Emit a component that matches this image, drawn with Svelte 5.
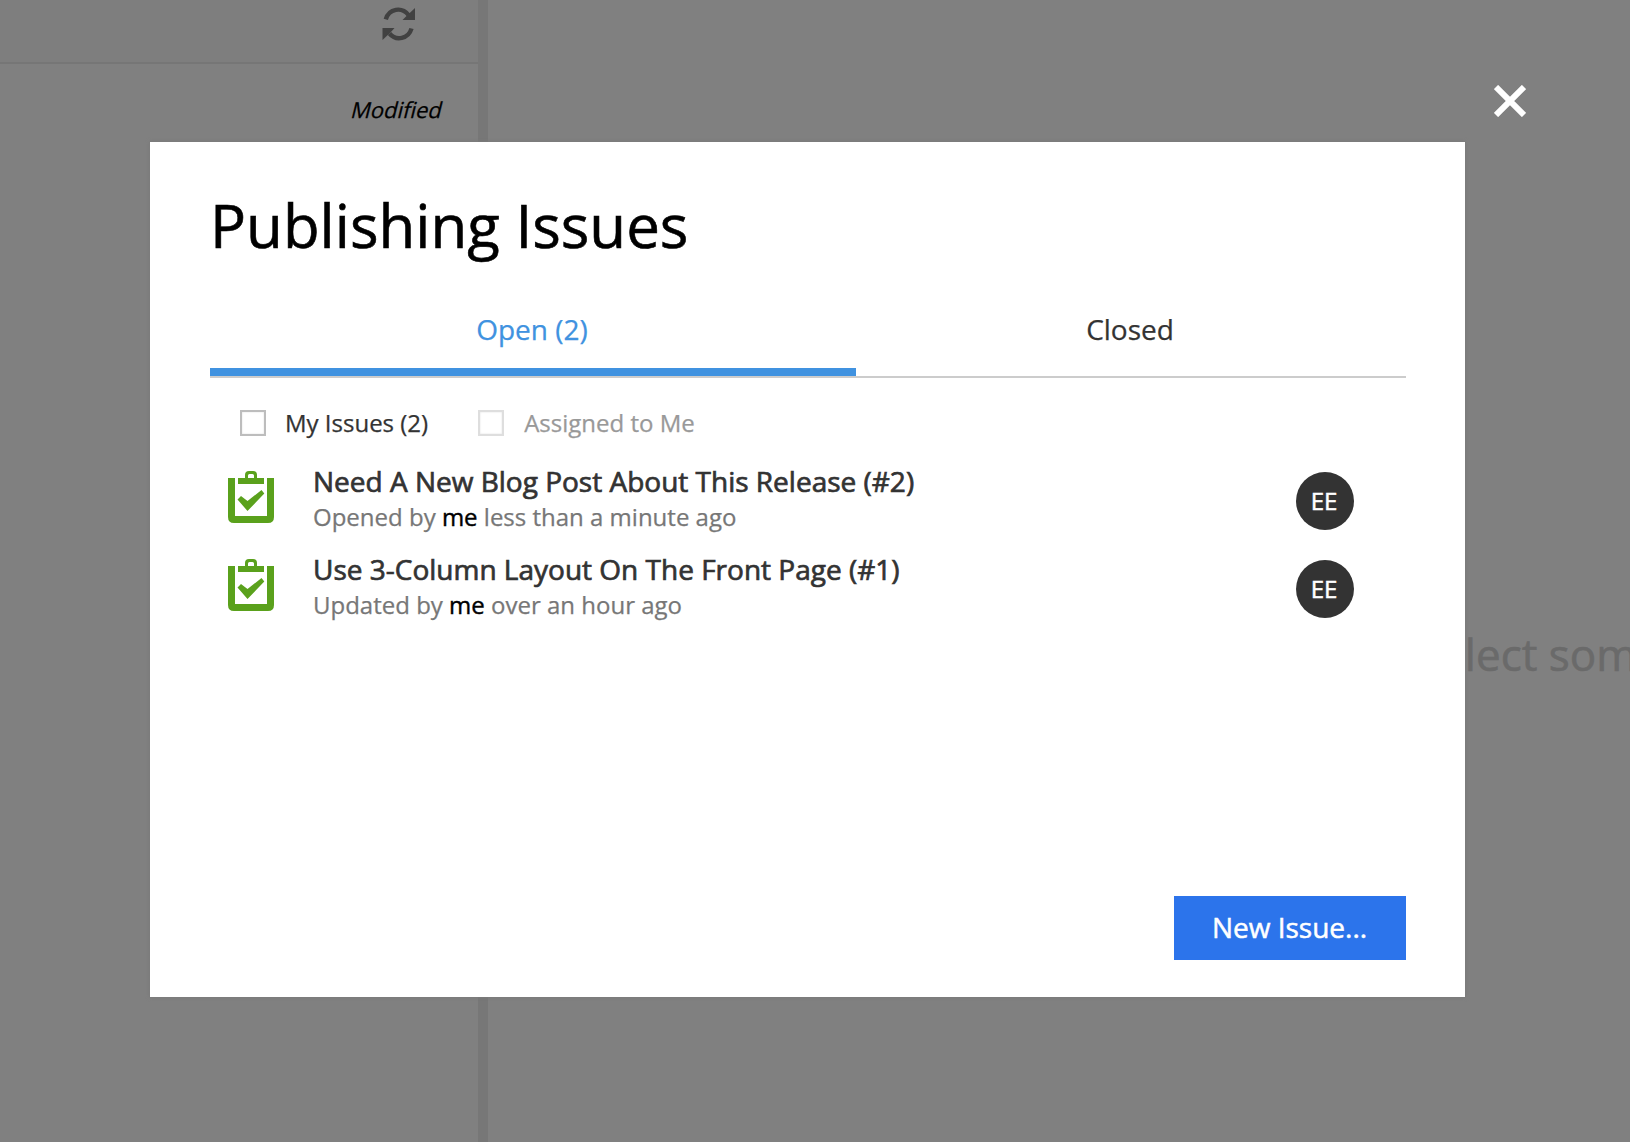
<script>
  const issues = [
    { title: 'Need A New Blog Post About This Release (#2)', action: 'Opened by', when: 'less than a minute ago', initials: 'EE' },
    { title: 'Use 3-Column Layout On The Front Page (#1)', action: 'Updated by', when: 'over an hour ago', initials: 'EE' }
  ];
</script>

<div class="screen">
  <div class="app">
    <section class="grid-panel">
      <div class="toolbar">
        <svg class="refresh" width="34" height="34" viewBox="0 0 34 34">
          <path d="M3.800 12.300C7 1.200 20 -0.500 26.500 8" fill="none" stroke="#414141" stroke-width="4.400" />
          <path d="M33 1V13H20.500L25 8.500Z" fill="#414141" />
          <path d="M29.500 21.500C26.500 32 14 34.300 7.500 26.500" fill="none" stroke="#414141" stroke-width="4.400" />
          <path d="M0.500 33V21H12.500L8.500 25.500Z" fill="#414141" />
        </svg>
      </div>
      <div class="column-head"><span>Modified</span></div>
    </section>
    <div class="splitter"></div>
    <section class="preview"><span>Select something</span></section>
  </div>

  <div class="overlay">
    <div class="dialog">
      <h1>Publishing Issues</h1>
      <nav class="tabs">
        <div class="tab active">Open (2)</div>
        <div class="tab closed">Closed</div>
      </nav>
      <div class="filters">
        <label class="filter"><span class="box"></span><span class="name">My Issues (2)</span></label>
        <label class="filter disabled"><span class="box"></span><span class="name">Assigned to Me</span></label>
      </div>
      <div class="list">
        {#each issues as issue}
          <div class="issue">
            <svg class="clip" width="46" height="52" viewBox="0 0 46 52">
              <path d="M0 7H7V45H39V7H46V46Q46 52 40 52H6Q0 52 0 46Z" />
              <path d="M10 7H17V4Q17 0 21 0H25Q29 0 29 4V7H36V13H10ZM20 7H26V4.500Q26 3 24.500 3H21.500Q20 3 20 4.500Z" fill-rule="evenodd" />
              <path d="M9.500 28.500L13 25L19.500 30L33.500 19L36.300 22.500L19.500 40Z" />
            </svg>
            <div class="info">
              <div class="name">{issue.title}</div>
              <div class="meta">{issue.action} <b>me</b> {issue.when}</div>
            </div>
            <div class="avatar">{issue.initials}</div>
          </div>
        {/each}
      </div>
      <div class="actions"><button>New Issue...</button></div>
    </div>
    <svg class="close" width="32" height="32" viewBox="0 0 32 32">
      <path d="M2 2L30 30M30 2L2 30" stroke="#fff" stroke-width="6" />
    </svg>
  </div>
</div>

<style>
  :global(body) { margin: 0; overflow: hidden; }
  .screen {
    position: relative;
    width: 1630px;
    height: 1142px;
    overflow: hidden;
    background: #808080;
    font-family: 'Open Sans', 'Noto Sans', sans-serif;
    -webkit-text-stroke-width: 0.25px;
  }
  .app { display: flex; height: 100%; }
  .grid-panel { width: 478px; flex: none; }
  .toolbar {
    box-sizing: border-box;
    height: 64px;
    padding: 7px 62px 0 0;
    border-bottom: 2px solid #767676;
    background: #7e7e7e;
    display: flex;
    justify-content: flex-end;
  }
  .column-head {
    padding: 30px 35px 0 0;
    text-align: right;
    font-size: 22px;
    line-height: 30px;
    color: #000;
  }
  /* slanted upright face, wider than the true italic */
  .column-head span { display: inline-block; transform: skewX(-14deg); }
  .splitter { width: 10px; flex: none; background: #777; }
  .preview {
    flex: 1;
    min-width: 0;
    padding: 624px 0 0 928px;
    box-sizing: border-box;
    font-size: 44px;
    line-height: 60px;
    color: #6a6a6a;
    white-space: nowrap;
  }
  .preview span { -webkit-text-stroke: 0.6px #6a6a6a; }
  .overlay {
    position: absolute;
    inset: 0;
    display: flex;
    align-items: flex-start;
    padding: 142px 0 0 150px;
  }
  .dialog {
    box-sizing: border-box;
    width: 1315px;
    height: 855px;
    padding: 43px 59px 37px 60px;
    background: #fff;
    box-shadow: 0 0 3px 1px #7a7a7a;
    display: flex;
    flex-direction: column;
  }
  .close { flex: none; margin: -57px 0 0 29px; }
  h1 { margin: 0; font-size: 60px; font-weight: 400; line-height: 80px; color: #000; -webkit-text-stroke: 0.6px #000; }
  .tabs {
    display: flex;
    height: 78px;
    margin-top: 33px;
    border-bottom: 2px solid #ccc;
    font-size: 28px;
    line-height: 62px;
    text-align: center;
    color: #333;
  }
  .tab { box-sizing: border-box; width: 646px; height: 78px; padding-right: 2px; }
  .tab.active { color: #4092e0; border-bottom: 8px solid #4092e0; }
  .tab.closed { width: 550px; }
  .filters { display: flex; gap: 50px; padding: 29px 0 0 30px; font-size: 24px; line-height: 32px; color: #333; }
  .filter { display: flex; align-items: center; gap: 19px; }
  .box {
    box-sizing: border-box;
    width: 26px;
    height: 26px;
    border: 2px solid #bdbdbd;
    box-shadow: inset 0 0 2px #ddd;
  }
  .disabled { gap: 20px; color: #999; }
  .disabled .box { border-color: #dedede; }
  .list { padding: 23px 52px 0 18px; }
  .issue { display: flex; height: 88px; align-items: flex-start; }
  .clip { flex: none; margin-top: 9px; fill: #5aa11c; }
  .info { flex: 1; margin-left: 39px; }
  .info .name {
    font-size: 28px;
    line-height: 38px;
    color: #333;
    -webkit-text-stroke: 0.7px #333;
  }
  .meta { margin-top: 1px; font-size: 24px; line-height: 32px; color: #777; }
  .meta b { font-weight: 400; color: #000; -webkit-text-stroke: 0.4px #000; }
  .avatar {
    box-sizing: border-box;
    width: 58px;
    height: 58px;
    margin-top: 10px;
    padding-right: 2px;
    border-radius: 50%;
    background: #333;
    color: #fff;
    font-size: 24px;
    line-height: 57px;
    text-align: center;
    -webkit-text-stroke: 0.5px #fff;
  }
  .actions { margin-top: auto; display: flex; justify-content: flex-end; }
  button {
    width: 232px;
    height: 64px;
    padding: 0 1px 2px 0;
    border: 0;
    background: #2c74eb;
    color: #fff;
    font: 28px/62px 'Open Sans', 'Noto Sans', sans-serif;
    -webkit-text-stroke: 0.5px #fff;
  }
</style>
